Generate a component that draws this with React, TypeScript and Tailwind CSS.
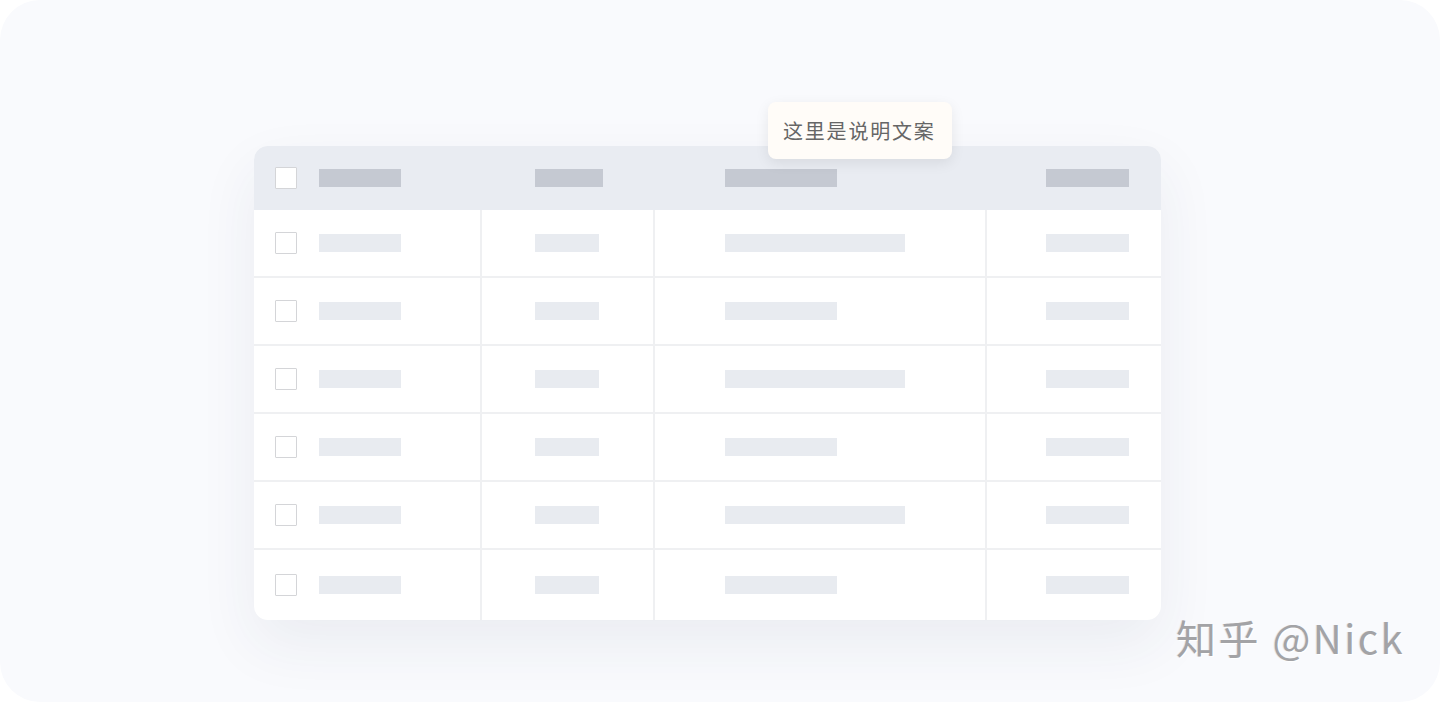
import React from 'react';

const rows = [180, 112, 180, 112, 180, 112];

function Check() {
  return <div className="w-[22px] h-[22px] border border-[#d4d5d8] bg-white rounded-[1px] shrink-0" />;
}

export default function App() {
  return (
    <div className="w-[1440px] h-[702px] bg-white overflow-hidden" style={{ fontFamily: '"Noto Sans CJK SC", "Noto Sans", sans-serif' }}>
      <div className="relative w-full h-full rounded-[40px] bg-[#f9fafd] pt-[146px] pl-[254px]">
        {/* Table card */}
        <div className="w-[907px] rounded-[14px] bg-white overflow-hidden shadow-[0_24px_60px_rgba(40,50,80,0.07)]">
          <div className="h-[64px] bg-[#e9ecf2] grid grid-cols-[226px_173px_332px_176px] items-center">
            <div className="flex items-center pl-[21px] gap-[22px]">
              <Check />
              <div className="w-[82px] h-[18px] bg-[#c5c9d2]" />
            </div>
            <div className="pl-[55px]"><div className="w-[68px] h-[18px] bg-[#c5c9d2]" /></div>
            <div className="pl-[72px]"><div className="w-[112px] h-[18px] bg-[#c5c9d2]" /></div>
            <div className="pl-[61px]"><div className="w-[83px] h-[18px] bg-[#c5c9d2]" /></div>
          </div>
          {rows.map((w, i) => (
            <div
              key={i}
              className={
                'grid grid-cols-[226px_173px_332px_176px] ' +
                (i === 0 ? 'h-[66px]' : i === rows.length - 1 ? 'h-[72px] border-t-2 border-[#eff0f2]' : 'h-[68px] border-t-2 border-[#eff0f2]')
              }
            >
              <div className="flex items-center pl-[21px] gap-[22px]">
                <Check />
                <div className="w-[82px] h-[18px] bg-[#e8ebf0]" />
              </div>
              <div className="flex items-center pl-[53px] border-l-2 border-[#eff0f2]"><div className="w-[64px] h-[18px] bg-[#e8ebf0]" /></div>
              <div className="flex items-center pl-[70px] border-l-2 border-[#eff0f2]">
                <div className={w === 180 ? 'w-[180px] h-[18px] bg-[#e8ebf0]' : 'w-[112px] h-[18px] bg-[#e8ebf0]'} />
              </div>
              <div className="flex items-center pl-[59px] border-l-2 border-[#eff0f2]"><div className="w-[83px] h-[18px] bg-[#e8ebf0]" /></div>
            </div>
          ))}
        </div>

        {/* Tooltip */}
        <div className="absolute left-[768px] top-[102px] w-[184px] h-[57px] rounded-[8px] bg-[#fffcf8] shadow-[0_4px_14px_rgba(0,0,0,0.08)] flex items-center pl-[15px]">
          <span className="text-[20px] tracking-[1.8px] text-[#666666] leading-none">这里是说明文案</span>
        </div>

        {/* Watermark */}
        <div className="absolute left-[1176px] top-[617px] text-[40px] tracking-[2.5px] leading-none text-[#a3a3a6] [text-shadow:1px_1px_0_#ffffff,-1px_0_0_#e6e6e9]" style={{ fontFamily: '"Noto Sans CJK SC", "Liberation Sans", sans-serif' }}>
          知乎 @Nick
        </div>
      </div>
    </div>
  );
}
